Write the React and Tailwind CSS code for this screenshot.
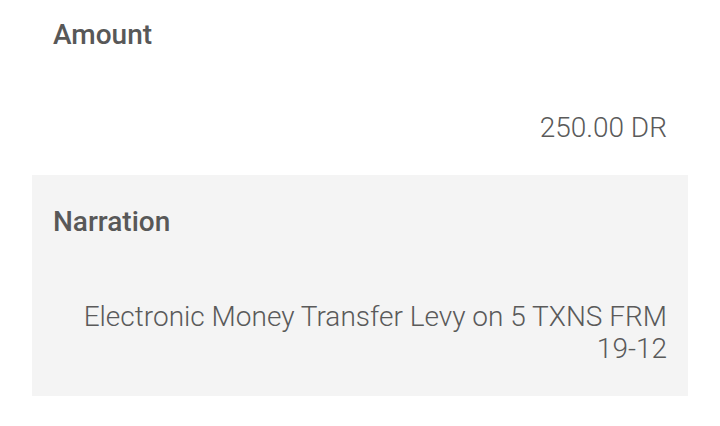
export default function App() {
  return (
    <div className="w-[720px] h-[426px] bg-white px-8 font-['Roboto',sans-serif] overflow-hidden">
      <div className="px-[21px] pt-[19px] pb-[31px]">
        <div className="text-[28px] leading-[32px] font-medium text-[#585858]">Amount</div>
        <div className="mt-[61px] text-right text-[28px] leading-[32px] font-light text-[#5a5a5a]">250.00 DR</div>
      </div>
      <div className="bg-[#f4f4f4] px-[21px] pt-[31px] pb-[31px]">
        <div className="text-[28px] leading-[32px] font-medium text-[#585858]">Narration</div>
        <div className="mt-[63px] text-right text-[28px] leading-[32px] font-light text-[#5a5a5a]">
          Electronic Money Transfer Levy on 5 TXNS FRM 19-12
        </div>
      </div>
    </div>
  );
}
